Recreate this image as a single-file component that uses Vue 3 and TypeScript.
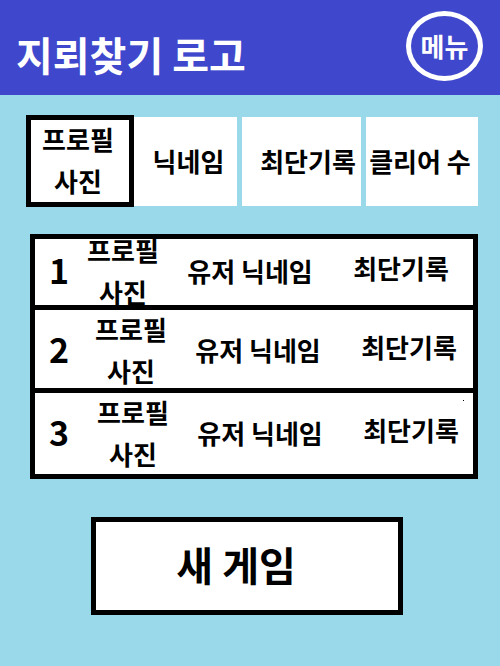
<script setup lang="ts">
interface Entry {
  rank: number
  nickname: string
  record: string
}

const entries: Entry[] = [
  { rank: 1, nickname: '유저 닉네임', record: '최단기록' },
  { rank: 2, nickname: '유저 닉네임', record: '최단기록' },
  { rank: 3, nickname: '유저 닉네임', record: '최단기록' },
]
</script>

<template>
  <div class="page">
    <header class="top">
      <h1 class="logo">지뢰찾기 로고</h1>
      <button type="button" class="menu">메뉴</button>
    </header>

    <main class="content">
      <section class="profile">
        <div class="box photo">프로필<br />사진</div>
        <div class="box nickname">닉네임</div>
        <div class="box record">최단기록</div>
        <div class="box clears">클리어 수</div>
      </section>

      <table class="ranking">
        <tbody>
          <tr v-for="entry in entries" :key="entry.rank" :class="'row row-' + entry.rank">
            <th scope="row" class="rank">{{ entry.rank }}</th>
            <td class="user-photo">프로필<br />사진</td>
            <td class="user-name">{{ entry.nickname }}</td>
            <td class="user-record">{{ entry.record }}</td>
          </tr>
        </tbody>
      </table>

      <button type="button" class="new-game">새 게임</button>
    </main>
  </div>
</template>

<style>
body {
  background: #99d9ea;
}
</style>

<style scoped>
.page {
  min-height: 100vh;
  background: #99d9ea;
  color: #000;
  font-family: "Noto Sans CJK KR", sans-serif;
  font-size: 26px;
  font-weight: 700;
  line-height: 42px;
}

.page * {
  box-sizing: border-box;
}

.top {
  display: flex;
  align-items: center;
  justify-content: space-between;
  height: 95px;
  padding: 0 17px 4px 16px;
  background: #3f48cc;
  color: #fff;
}

.logo {
  margin: 0;
  padding-top: 16px;
  font-size: 40px;
  line-height: 60px;
  white-space: nowrap;
}

button {
  font-family: inherit;
  font-weight: inherit;
  cursor: pointer;
}

.menu {
  width: 77px;
  height: 70px;
  padding: 0;
  border: 5px solid #fff;
  border-radius: 50%;
  background: transparent;
  color: inherit;
  font-size: 26px;
  line-height: 42px;
}

.content {
  display: flex;
  flex-direction: column;
  padding: 20px 22px 0 26px;
}

.profile {
  display: grid;
  grid-template-columns: 108fr 103fr 5px 119fr 5px 112fr;
  align-items: center;
}

.box {
  display: flex;
  align-items: center;
  justify-content: center;
  height: 89px;
  background: #fff;
  text-align: center;
  white-space: nowrap;
}

.photo {
  height: 92px;
  padding: 0 4px 2px 0;
  border: 5px solid #000;
}

.nickname {
  padding-left: 6px;
}

.record {
  grid-column: 4;
  padding-left: 13px;
}

.clears {
  grid-column: 6;
  padding-right: 4px;
}

.ranking {
  display: block;
  margin: 27px 0 0 4px;
  border: 5px solid #000;
  background: #fff;
}

.ranking tbody {
  display: block;
}

.row {
  position: relative;
  display: grid;
  grid-template-columns: 48px 80fr 180fr 116fr;
  grid-template-rows: 64px;
  align-items: center;
  padding: 0 14px 2px 0;
  text-align: center;
  white-space: nowrap;
}

.row + .row {
  border-top: 5px solid #000;
}

.row-2 {
  grid-template-columns: 56px 80fr 180fr 116fr;
  padding: 8px 6px 6px 0;
}

.row-3 {
  grid-template-columns: 58px 80fr 180fr 116fr;
  padding: 8px 4px 9px 0;
}

.row-3::after {
  content: "";
  position: absolute;
  top: 7px;
  right: 9px;
  width: 1px;
  height: 1px;
  background: #000;
}

.row th,
.row td {
  padding: 0;
}

.row .rank {
  padding: 0 0 2px 14px;
  font-size: 34px;
  text-align: left;
}

.row .user-name {
  padding-right: 6px;
}

.row .user-record {
  padding-bottom: 6px;
}

.new-game {
  align-self: center;
  width: 69%;
  height: 98px;
  margin-top: 38px;
  margin-right: 10px;
  padding: 0 22px 4px 0;
  border: 5px solid #000;
  background: #fff;
  color: inherit;
  font-size: 40px;
  line-height: 60px;
}
</style>
